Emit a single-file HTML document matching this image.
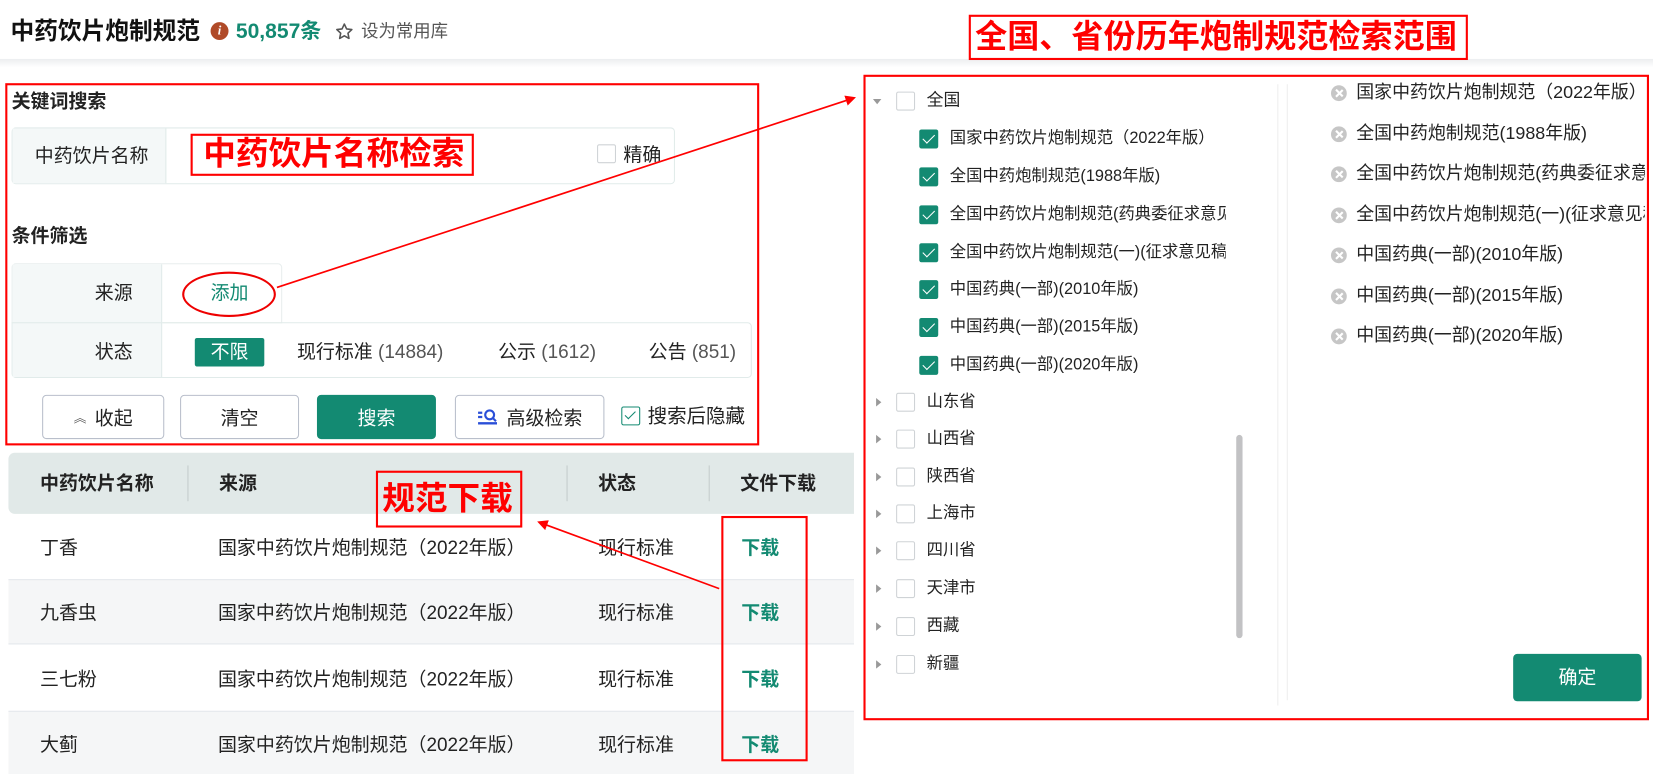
<!DOCTYPE html>
<html><head><meta charset="utf-8"><style>
*{margin:0;padding:0;box-sizing:border-box}
html,body{width:1653px;height:766px;overflow:hidden;background:#fff}
body{font-family:"Liberation Sans","Noto Sans CJK SC",sans-serif;color:#222}
#w{position:absolute;left:0;top:0;width:1570px;height:728px;transform:scale(1.053);transform-origin:0 0}
.a{position:absolute;white-space:nowrap}
.t{font-size:18px;line-height:22px}
.b{font-weight:bold}
.rb{position:absolute;border:2px solid #f00}
.red{color:#f00;font-weight:bold}
.cb{position:absolute;width:18px;height:18px;border:1px solid #cfd3d6;border-radius:2px;background:#fff}
.cbg{position:absolute;width:18px;height:18px;border-radius:2px;background:#138a72}
.cbg:after{content:"";position:absolute;left:6px;top:2px;width:5px;height:10px;border:solid #fff;border-width:0 1.5px 1.5px 0;transform:rotate(45deg)}
.btn{position:absolute;height:42px;border:1px solid #b9bfcb;border-radius:4px;background:#fff;font-size:18px;display:flex;align-items:center;justify-content:center}
.g{color:#138a72}
.x{position:absolute;width:15px;height:15px;border-radius:50%;background:#c6c6c6}
.x:before,.x:after{content:"";position:absolute;left:7px;top:3px;width:1.5px;height:9px;background:#fff;transform:rotate(45deg)}
.x:after{transform:rotate(-45deg)}
.tri{position:absolute;width:0;height:0;border-top:4px solid transparent;border-bottom:4px solid transparent;border-left:5px solid #999}
.tl{font-size:15.5px;line-height:20px}
</style></head><body><div id="w">
<div class="a b" style="left:10px;top:17px;font-size:22.5px;line-height:26px;color:#111">中药饮片炮制规范</div>
<div class="a" style="left:200px;top:21px;width:17px;height:17px;border-radius:50%;background:#b04a28;color:#fff;font:italic bold 12px/17px 'Liberation Serif',serif;text-align:center">i</div>
<div class="a b g" style="left:224px;top:18px;font-size:20px;line-height:24px">50,857条</div>
<svg class="a" style="left:318px;top:21px" width="18" height="18" viewBox="0 0 24 24"><path d="M12 2.5l2.9 6.1 6.6.8-4.9 4.6 1.3 6.6L12 17.3l-5.9 3.3 1.3-6.6-4.9-4.6 6.6-.8z" fill="none" stroke="#555" stroke-width="2" stroke-linejoin="round"/></svg>
<div class="a" style="left:343px;top:20px;font-size:16.5px;line-height:20px;color:#555">设为常用库</div>
<div class="a" style="left:0;top:56px;width:1570px;height:8px;background:linear-gradient(#eceef0,#fff)"></div>

<div class="rb" style="left:920px;top:14px;width:474px;height:43px"></div>
<div class="a red" style="left:926px;top:17px;font-size:30.5px;line-height:36px">全国、省份历年炮制规范检索范围</div>

<div class="rb" style="left:5px;top:79px;width:716px;height:344px"></div>
<div class="a b t" style="left:11px;top:85px">关键词搜索</div>
<div class="a" style="left:11px;top:121px;width:630px;height:54px;border:1px solid #e1ebea;border-radius:4px"></div>
<div class="a" style="left:12px;top:122px;width:146px;height:52px;background:#f4f8f8;border-right:1px solid #e1ebea"></div>
<div class="a t" style="left:33px;top:137px">中药饮片名称</div>
<div class="rb" style="left:181px;top:127px;width:269px;height:40px"></div>
<div class="a red" style="left:193px;top:128px;font-size:31px;line-height:36px">中药饮片名称检索</div>
<div class="cb" style="left:567px;top:137px"></div>
<div class="a t" style="left:592px;top:136px">精确</div>

<div class="a b t" style="left:11px;top:213px">条件筛选</div>
<div class="a" style="left:11px;top:250px;width:257px;height:57px;border:1px solid #e8eeee;border-radius:4px 4px 0 0"></div>
<div class="a" style="left:11px;top:306px;width:703px;height:53px;border:1px solid #e1ebea;border-radius:0 4px 4px 4px"></div>
<div class="a" style="left:12px;top:251px;width:142px;height:107px;background:#f4f8f8;border-right:1px solid #e1ebea"></div>
<div class="a" style="left:12px;top:306px;width:142px;height:1px;background:#e1ebea"></div>
<div class="a t" style="left:90px;top:267px">来源</div>
<div class="a t" style="left:90px;top:323px">状态</div>
<div class="a" style="left:173px;top:258px;width:89px;height:43px;border:2px solid #e00;border-radius:50%"></div>
<div class="a t g" style="left:200px;top:267px">添加</div>
<div class="a" style="left:185px;top:321px;width:66px;height:27px;background:#138a72;border-radius:2px;color:#fff;font-size:18px;line-height:27px;text-align:center">不限</div>
<div class="a t" style="left:282px;top:323px">现行标准 <span style="color:#555">(14884)</span></div>
<div class="a t" style="left:473px;top:323px">公示 <span style="color:#555">(1612)</span></div>
<div class="a t" style="left:616px;top:323px">公告 <span style="color:#555">(851)</span></div>

<div class="btn" style="left:40px;top:375px;width:116px"><span style="font-size:12px;color:#555;margin-right:8px">︽</span>收起</div>
<div class="btn" style="left:171px;top:375px;width:113px">清空</div>
<div class="btn" style="left:301px;top:375px;width:113px;background:#138a72;border-color:#138a72;color:#fff">搜索</div>
<div class="btn" style="left:432px;top:375px;width:142px"><svg width="20" height="16" viewBox="0 0 20 16" style="margin-right:8px"><path d="M1 4h4M1 8h4M1 14h18" stroke="#2a4fd8" stroke-width="2.2"/><circle cx="12" cy="6" r="4.2" fill="none" stroke="#2a4fd8" stroke-width="2"/><path d="M15 9l3 3" stroke="#2a4fd8" stroke-width="2"/></svg>高级检索</div>
<div class="a" style="left:590px;top:386px;width:18px;height:18px;border:1px solid #138a72;border-radius:2px"></div>
<div class="a" style="left:596px;top:388px;width:5px;height:10px;border:solid #138a72;border-width:0 1.5px 1.5px 0;transform:rotate(45deg)"></div>
<div class="a" style="left:615px;top:384px;font-size:18.5px;line-height:22px">搜索后隐藏</div>

<div class="a" style="left:8px;top:430px;width:803px;height:58px;background:#e1e9e8;border-radius:6px 0 0 6px"></div>
<div class="a" style="left:178px;top:442px;width:1px;height:34px;background:#c4cccc"></div>
<div class="a" style="left:538px;top:442px;width:1px;height:34px;background:#c4cccc"></div>
<div class="a" style="left:673px;top:442px;width:1px;height:34px;background:#c4cccc"></div>
<div class="a b t" style="left:38px;top:448px">中药饮片名称</div>
<div class="a b t" style="left:208px;top:448px">来源</div>
<div class="a b t" style="left:568px;top:448px">状态</div>
<div class="a b t" style="left:703px;top:448px">文件下载</div>

<div class="a" style="left:8px;top:550px;width:803px;height:62px;background:#f5f6f7;border-top:1px solid #e4e7ec;border-bottom:1px solid #e4e7ec"></div>
<div class="a" style="left:8px;top:675px;width:803px;height:60px;background:#f5f6f7;border-top:1px solid #e4e7ec"></div>

<div class="a t" style="left:38px;top:509px">丁香</div>
<div class="a t" style="left:38px;top:571px">九香虫</div>
<div class="a t" style="left:38px;top:634px">三七粉</div>
<div class="a t" style="left:38px;top:696px">大蓟</div>
<div class="a t" style="left:207px;top:509px">国家中药饮片炮制规范（2022年版）</div>
<div class="a t" style="left:207px;top:571px">国家中药饮片炮制规范（2022年版）</div>
<div class="a t" style="left:207px;top:634px">国家中药饮片炮制规范（2022年版）</div>
<div class="a t" style="left:207px;top:696px">国家中药饮片炮制规范（2022年版）</div>
<div class="a t" style="left:568px;top:509px">现行标准</div>
<div class="a t" style="left:568px;top:571px">现行标准</div>
<div class="a t" style="left:568px;top:634px">现行标准</div>
<div class="a t" style="left:568px;top:696px">现行标准</div>
<div class="a b t g" style="left:704px;top:509px">下载</div>
<div class="a b t g" style="left:704px;top:571px">下载</div>
<div class="a b t g" style="left:704px;top:634px">下载</div>
<div class="a b t g" style="left:704px;top:696px">下载</div>

<div class="rb" style="left:357px;top:447px;width:139px;height:54px"></div>
<div class="a red" style="left:363px;top:456px;font-size:31px;line-height:36px">规范下载</div>
<div class="rb" style="left:685px;top:490px;width:82px;height:233px"></div>

<div class="rb" style="left:820px;top:71px;width:746px;height:613px"></div>
<div class="a" style="left:1213px;top:80px;width:1px;height:590px;background:#eee"></div>
<div class="a" style="left:1222px;top:80px;width:1px;height:585px;background:#eee"></div>
<div class="a" style="left:1174px;top:413px;width:6px;height:193px;border-radius:3px;background:#c2c2c4"></div>

<div class="a" style="left:829px;top:94px;width:0;height:0;border-left:4px solid transparent;border-right:4px solid transparent;border-top:5px solid #999"></div>
<div class="cb" style="left:851px;top:87px"></div><div class="a tl" style="left:880px;top:86px;font-size:16px">全国</div>

<div class="cbg" style="left:873px;top:123px"></div><div class="a tl" style="left:902px;top:122px">国家中药饮片炮制规范（2022年版）</div>
<div class="cbg" style="left:873px;top:159px"></div><div class="a tl" style="left:902px;top:158px">全国中药炮制规范(1988年版)</div>
<div class="cbg" style="left:873px;top:195px"></div><div class="a tl" style="left:902px;top:194px;width:262px;overflow:hidden">全国中药饮片炮制规范(药典委征求意见稿)</div>
<div class="cbg" style="left:873px;top:231px"></div><div class="a tl" style="left:902px;top:230px;width:262px;overflow:hidden">全国中药饮片炮制规范(一)(征求意见稿)</div>
<div class="cbg" style="left:873px;top:266px"></div><div class="a tl" style="left:902px;top:265px">中国药典(一部)(2010年版)</div>
<div class="cbg" style="left:873px;top:302px"></div><div class="a tl" style="left:902px;top:301px">中国药典(一部)(2015年版)</div>
<div class="cbg" style="left:873px;top:338px"></div><div class="a tl" style="left:902px;top:337px">中国药典(一部)(2020年版)</div>

<div class="tri" style="left:832px;top:378px"></div><div class="cb" style="left:851px;top:373px"></div><div class="a tl" style="left:880px;top:372px">山东省</div>
<div class="tri" style="left:832px;top:413px"></div><div class="cb" style="left:851px;top:408px"></div><div class="a tl" style="left:880px;top:407px">山西省</div>
<div class="tri" style="left:832px;top:449px"></div><div class="cb" style="left:851px;top:444px"></div><div class="a tl" style="left:880px;top:443px">陕西省</div>
<div class="tri" style="left:832px;top:484px"></div><div class="cb" style="left:851px;top:479px"></div><div class="a tl" style="left:880px;top:478px">上海市</div>
<div class="tri" style="left:832px;top:519px"></div><div class="cb" style="left:851px;top:514px"></div><div class="a tl" style="left:880px;top:513px">四川省</div>
<div class="tri" style="left:832px;top:555px"></div><div class="cb" style="left:851px;top:550px"></div><div class="a tl" style="left:880px;top:549px">天津市</div>
<div class="tri" style="left:832px;top:591px"></div><div class="cb" style="left:851px;top:586px"></div><div class="a tl" style="left:880px;top:585px">西藏</div>
<div class="tri" style="left:832px;top:627px"></div><div class="cb" style="left:851px;top:622px"></div><div class="a tl" style="left:880px;top:621px">新疆</div>

<div style="position:absolute;left:1262px;top:76px;width:300px;height:260px;overflow:hidden">
<div class="x" style="left:2px;top:5px"></div><div class="a" style="left:26px;top:1px;font-size:17px;line-height:22px">国家中药饮片炮制规范（2022年版）</div>
<div class="x" style="left:2px;top:44px"></div><div class="a" style="left:26px;top:40px;font-size:17px;line-height:22px">全国中药炮制规范(1988年版)</div>
<div class="x" style="left:2px;top:82px"></div><div class="a" style="left:26px;top:78px;font-size:17px;line-height:22px">全国中药饮片炮制规范(药典委征求意见稿)</div>
<div class="x" style="left:2px;top:121px"></div><div class="a" style="left:26px;top:117px;font-size:17px;line-height:22px">全国中药饮片炮制规范(一)(征求意见稿)</div>
<div class="x" style="left:2px;top:159px"></div><div class="a" style="left:26px;top:155px;font-size:17px;line-height:22px">中国药典(一部)(2010年版)</div>
<div class="x" style="left:2px;top:198px"></div><div class="a" style="left:26px;top:194px;font-size:17px;line-height:22px">中国药典(一部)(2015年版)</div>
<div class="x" style="left:2px;top:236px"></div><div class="a" style="left:26px;top:232px;font-size:17px;line-height:22px">中国药典(一部)(2020年版)</div>
</div>
<div class="a" style="left:1437px;top:621px;width:122px;height:45px;background:#138a72;border-radius:4px;color:#fff;font-size:18px;line-height:45px;text-align:center">确定</div>

<svg class="a" style="left:0;top:0" width="1570" height="728">
<defs><marker id="m" markerWidth="10" markerHeight="10" refX="8" refY="5" orient="auto" markerUnits="userSpaceOnUse"><path d="M0 0L10 5L0 10z" fill="#f00"/></marker></defs>
<line x1="263" y1="273" x2="811" y2="93" stroke="#f00" stroke-width="1.6" marker-end="url(#m)"/>
<line x1="683" y1="559" x2="512" y2="496" stroke="#f00" stroke-width="1.6" marker-end="url(#m)"/>
</svg>
</div></body></html>
